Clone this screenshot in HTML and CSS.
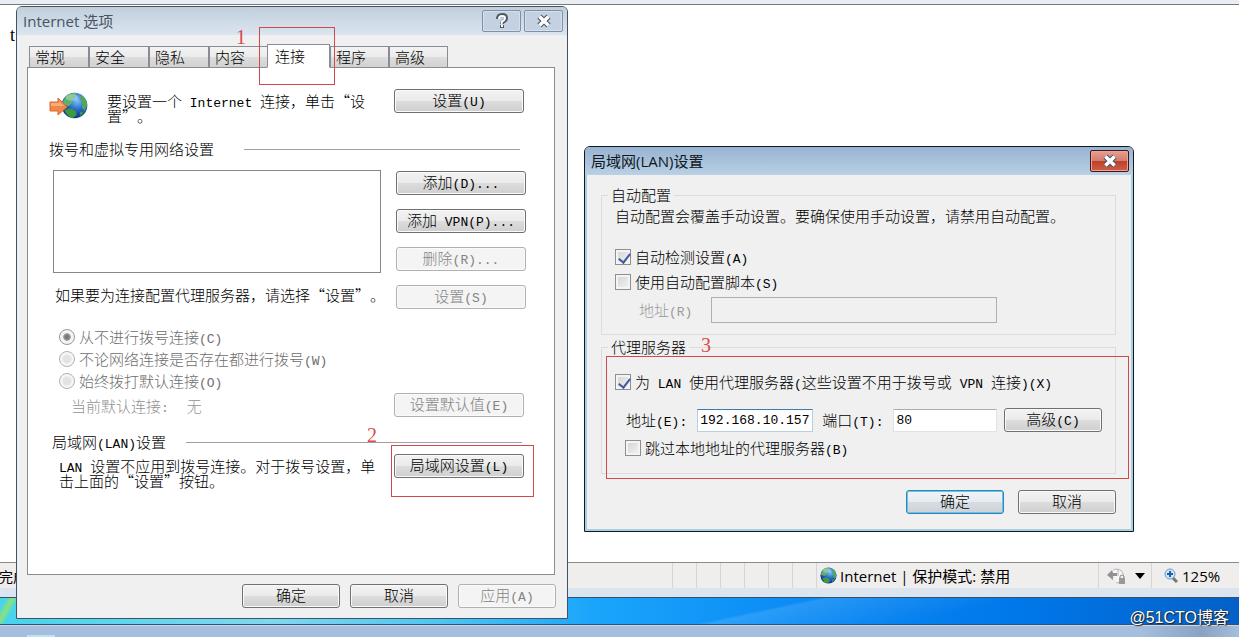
FILE: index.html
```html
<!DOCTYPE html>
<html lang="zh-CN">
<head>
    <meta charset="UTF-8">
    <meta name="viewport" content="width=device-width, initial-scale=1.0">
    <title>Internet 选项</title>
    <link rel="stylesheet" href="styles.css">
</head>
<body>
    <!-- Browser behind the dialogs -->
    <main class="browser">
        <p class="page-text">t</p>
    </main>
    <footer class="statusbar">
        <span class="status-done">完成</span>
        <span class="cells"><i></i><i></i><i></i><i></i><i></i><i></i></span>
        <span class="zone">
            <svg width="17" height="17" viewBox="0 0 40 40"><use href="#globe"/></svg>
            Internet | 保护模式: 禁用
        </span>
        <span class="privacy">
            <svg width="20" height="18" viewBox="0 0 20 18">
                <path d="M6 3a7 7 0 1 1 3 13" fill="#f6f6f6" stroke="#b5b5b5" stroke-width="1"/>
                <path d="M0 8l5-5 1 3h4v3H6v4z" fill="#929292"/>
                <path d="M11 2v7" stroke="#b5b5b5"/>
                <path d="M13 12v-2a2 2 0 0 1 4 0v2" fill="none" stroke="#888"/>
                <rect x="12" y="11" width="6" height="6" fill="#999"/>
            </svg>
            <svg width="10" height="6" viewBox="0 0 10 6"><path d="M0 0h10L5 6z" fill="#000"/></svg>
        </span>
        <span class="zoom">
            <svg width="14" height="15" viewBox="0 0 14 15">
                <path d="M8 9l5 5" stroke="#777" stroke-width="3"/>
                <circle cx="6" cy="6" r="5" fill="#cfe6f8" stroke="#6b9cc8"/>
                <path d="M6 3v6M3 6h6" stroke="#1f5fa8" stroke-width="2"/>
            </svg>
            125%
        </span>
    </footer>
    <div class="wallpaper"></div>
    <div class="taskbar"><span class="task-icon"></span></div>

    <!-- Internet options -->
    <section class="window options">
        <header class="titlebar">
            <h1>Internet 选项</h1>
            <button class="caption" aria-label="帮助">
                <svg width="12" height="16" viewBox="0 0 12 16">
                    <path d="M2 6q0-4 4-4t4 3q0 2-2 3t-2 3M6 12v3" fill="none" stroke="#4c5866" stroke-width="4"/>
                    <path d="M3 6q0-3 3-3t3 2q0 2-2 3t-1 3M6 12v2" fill="none" stroke="#fff" stroke-width="2"/>
                </svg>
            </button>
            <button class="caption" aria-label="关闭">
                <svg width="16" height="14" viewBox="0 0 14 12"><use href="#cross"/></svg>
            </button>
        </header>
        <nav class="tabs">
            <button>常规</button>
            <button>安全</button>
            <button>隐私</button>
            <button>内容</button>
            <button class="active">连接</button>
            <button>程序</button>
            <button>高级</button>
        </nav>
        <div class="panel">
            <div class="row setup">
                <svg class="net-icon" width="40" height="30" viewBox="0 0 40 30">
                    <svg x="12" y="1" width="27" height="27" viewBox="0 0 40 40"><use href="#globe"/></svg>
                    <path d="M1 11h8V7l9 9-9 8v-4H1z" fill="#f0874a" stroke="#e2662b"/>
                    <path d="M2 12h8v-2l5 5H2z" fill="#f8ae78"/>
                </svg>
                <p>要设置一个<span class="en"> Internet </span>连接，单击“设置”。</p>
                <button class="btn">设置<span class="en">(U)</span></button>
            </div>

            <h2 class="dial-title">拨号和虚拟专用网络设置</h2>
            <div class="row dial">
                <div class="dial-left">
                    <div class="listbox" role="listbox" aria-label="拨号和虚拟专用网络设置"></div>
                    <p>如果要为连接配置代理服务器，请选择“设置”。</p>
                </div>
                <div class="dial-buttons">
                    <button class="btn">添加<span class="en">(D)...</span></button>
                    <button class="btn">添加<span class="en"> VPN(P)...</span></button>
                    <button class="btn" disabled>删除<span class="en">(R)...</span></button>
                    <button class="btn" disabled>设置<span class="en">(S)</span></button>
                </div>
            </div>
            <div class="row defaults">
                <div class="radios">
                    <label><input type="radio" name="dial" checked disabled><span>从不进行拨号连接<span class="en">(C)</span></span></label>
                    <label><input type="radio" name="dial" disabled><span>不论网络连接是否存在都进行拨号<span class="en">(W)</span></span></label>
                    <label><input type="radio" name="dial" disabled><span>始终拨打默认连接<span class="en">(O)</span></span></label>
                    <p class="current"><span>当前默认连接<span class="en">:</span></span><span>无</span></p>
                </div>
                <button class="btn" disabled>设置默认值<span class="en">(E)</span></button>
            </div>

            <h2 class="lan-title"><span>局域网<span class="en">(LAN)</span>设置</span></h2>
            <div class="row lan">
                <p><span class="en">LAN </span>设置不应用到拨号连接。对于拨号设置，单击上面的“设置”按钮。</p>
                <button class="btn">局域网设置<span class="en">(L)</span></button>
            </div>
        </div>
        <div class="actions">
            <button class="btn">确定</button>
            <button class="btn">取消</button>
            <button class="btn" disabled>应用<span class="en">(A)</span></button>
        </div>
    </section>

    <!-- LAN settings -->
    <section class="window lan-window">
        <header class="titlebar">
            <h1>局域网(LAN)设置</h1>
            <button class="caption close" aria-label="关闭">
                <svg width="16" height="14" viewBox="0 0 14 12"><use href="#cross"/></svg>
            </button>
        </header>
        <form class="lan-form">
            <fieldset>
                <legend>自动配置</legend>
                <p>自动配置会覆盖手动设置。要确保使用手动设置，请禁用自动配置。</p>
                <label class="check first"><input type="checkbox" checked><span>自动检测设置<span class="en">(A)</span></span></label>
                <label class="check"><input type="checkbox"><span>使用自动配置脚本<span class="en">(S)</span></span></label>
                <div class="script-row">
                    <label for="script">地址<span class="en">(R)</span></label>
                    <input type="text" id="script" disabled>
                </div>
            </fieldset>
            <fieldset class="proxy">
                <legend>代理服务器</legend>
                <label class="check"><input type="checkbox" checked><span>为<span class="en"> LAN </span>使用代理服务器<span class="en">(</span>这些设置不用于拨号或<span class="en"> VPN </span>连接<span class="en">)(X)</span></span></label>
                <div class="proxy-row">
                    <label for="address">地址<span class="en">(E):</span></label>
                    <input type="text" id="address" value="192.168.10.157">
                    <label for="port">端口<span class="en">(T):</span></label>
                    <input type="text" id="port" value="80">
                    <button type="button" class="btn">高级<span class="en">(C)</span></button>
                </div>
                <label class="check bypass"><input type="checkbox"><span>跳过本地地址的代理服务器<span class="en">(B)</span></span></label>
            </fieldset>
            <div class="actions">
                <button type="button" class="btn primary">确定</button>
                <button type="button" class="btn">取消</button>
            </div>
        </form>
    </section>

    <!-- Step marks -->
    <div class="mark mark-1"></div><span class="step step-1">1</span>
    <div class="mark mark-2"></div><span class="step step-2">2</span>
    <div class="mark mark-3"></div><span class="step step-3">3</span>
    <div class="watermark">@51CTO博客</div>

    <!-- Shared icons -->
    <svg class="defs" width="0" height="0">
        <defs>
            <radialGradient id="sea" cx="60%" cy="30%" r="75%">
                <stop offset="0" stop-color="#7fc4f7"/>
                <stop offset="0.5" stop-color="#2468c4"/>
                <stop offset="1" stop-color="#0b2f7c"/>
            </radialGradient>
            <symbol id="globe" viewBox="0 0 40 40">
                <circle cx="20" cy="20" r="19" fill="url(#sea)"/>
                <path d="M7 7Q14 0 23 2l-2 6-5 3 1 5-6 5-9-3Q3 12 7 7z" fill="#5fb06a"/>
                <path d="M5 27l9-3 8 4 1 6-6 5Q9 36 5 27z" fill="#3d9a3f"/>
                <path d="M30 5q8 5 9 14l-4 9-4-5 1-8-4-5z" fill="#52a94e"/>
                <path d="M28 30l6-1-5 7z" fill="#3d9a3f"/>
                <ellipse cx="16" cy="8" rx="9" ry="5" fill="#fff" opacity="0.3"/>
            </symbol>
            <symbol id="cross" viewBox="0 0 14 12">
                <path d="M3 2l8 8M11 2l-8 8" stroke="#4c5866" stroke-width="5"/>
                <path d="M3 2l8 8M11 2l-8 8" stroke="#fff" stroke-width="3"/>
            </symbol>
        </defs>
    </svg>
</body>
</html>
```
FILE: styles.css
```css
* {
    box-sizing: border-box;
}
body {
    margin: 0;
    min-height: 100vh;
    display: flex;
    flex-direction: column;
    position: relative;
    overflow: hidden;
    background: #fff;
    color: #000;
    font-family: "Noto Sans CJK SC", sans-serif;
    font-size: 15px;
    font-weight: 300;
    line-height: 20px;
    text-spacing-trim: space-all;
}
h1, h2, p {
    margin: 0;
    font-size: 15px;
    font-weight: inherit;
}
button, input {
    font: inherit;
    color: inherit;
    margin: 0;
}
.en {
    font-family: "Liberation Mono", monospace;
    font-size: 13px;
    line-height: 0;
    white-space: pre;
}
.defs {
    position: absolute;
}

/* Browser and desktop */
.browser {
    flex: 1;
    border-top: 4px solid #e9eef4;
    box-shadow: inset 0 1px #777;
    padding: 21px 10px;
}
.page-text {
    font-family: "Liberation Serif", serif;
    font-size: 18px;
}
.statusbar {
    display: flex;
    height: 35px;
    border-top: 1px solid #8c8c8c;
    border-bottom: 9px solid #dbe5ef;
    background: #f0eeed;
    font-family: "Open Sans", "Noto Sans CJK SC", sans-serif;
    font-weight: 400;
    line-height: 28px;
    white-space: nowrap;
}
.status-done {
    flex: 1;
    margin-left: -1px;
    font-size: 14px;
}
.cells {
    display: flex;
}
.cells i {
    width: 24px;
    border-left: 1px solid #d5d5d5;
}
.zone, .privacy, .zoom {
    display: flex;
    align-items: center;
    border-left: 1px solid #d5d5d5;
}
.zone {
    width: 282px;
    gap: 3px;
    padding-left: 3px;
    font-size: 15px;
}
.privacy {
    width: 53px;
    gap: 8px;
    padding-left: 8px;
}
.zoom {
    width: 88px;
    gap: 4px;
    padding-left: 12px;
}
.wallpaper {
    height: 27px;
    border-top: 1px solid #35506b;
    background: linear-gradient(168deg, transparent 60%, rgba(255, 255, 255, 0.12) 61%, transparent 75%), linear-gradient(120deg, #45d4ec 5px, #8be27a 11px, #45d4ec 17px, transparent 18px), linear-gradient(90deg, #45d4ec, #7fd8ee 22%, #4cc4f2 36%, #1aa5fb 48%, #0a8af5 65%, #0078ea 82%, #0360c8);
}
.taskbar {
    height: 13px;
    border-top: 1px solid #35506b;
    box-shadow: inset 0 1px #c8d8ea;
    background: linear-gradient(90deg, #a5bedd 92%, #8ba3c2 97%, #a5bedd);
    padding: 10px 27px 0;
}
.task-icon {
    display: block;
    width: 28px;
    height: 2px;
    background: #b8e4f4;
}

/* Windows */
.window {
    position: absolute;
    width: 100%;
    border: 1px solid #45515e;
    border-radius: 6px 6px 0 0;
    background: #f0f0f0;
}
.options {
    left: 16px;
    top: 6px;
    max-width: 552px;
    box-shadow: inset 0 0 0 1px #eaf0f5;
}
.lan-window {
    left: 584px;
    top: 146px;
    max-width: 550px;
    border-color: #101820;
    box-shadow: inset 0 0 0 2px #a9cfe2;
}
.titlebar {
    display: flex;
    align-items: center;
    gap: 3px;
    height: 28px;
    padding: 0 4px 0 6px;
    border-radius: 5px 5px 0 0;
    background: linear-gradient(#c1cfdc, #dae5f0);
}
.titlebar h1 {
    flex: 1;
    color: #49535f;
    font-family: "Open Sans", "Noto Sans CJK SC", sans-serif;
    font-size: 15px;
    font-weight: 400;
}
.lan-window .titlebar {
    background: linear-gradient(#98b3d2, #b9d0e5);
}
.lan-window h1 {
    color: #101820;
}
.caption {
    display: flex;
    align-items: center;
    justify-content: center;
    width: 39px;
    height: 22px;
    padding: 0;
    border: 1px solid #7c91ab;
    border-radius: 2px;
    background: #c3d1e0;
    box-shadow: inset 0 0 0 1px #d5e0ea;
}
.close {
    border-color: #4b1216;
    background: linear-gradient(#e5a095, #d67c6c 48%, #bd3f28 50%, #cc6149);
    box-shadow: inset 0 0 0 1px #e6a79b;
}

/* Tabs */
.tabs {
    display: flex;
    align-items: flex-end;
    margin-bottom: -1px;
    padding: 9px 12px 0;
    position: relative;
}
.tabs button {
    width: 60px;
    height: 22px;
    padding: 0 5px;
    border: 1px solid #898c95;
    background: linear-gradient(#f3f3f3, #ebebeb 50%, #dddddd 50%, #d2d2d2);
    line-height: 20px;
    text-align: left;
}
.tabs .active {
    width: 63px;
    height: 24px;
    margin-left: -2px;
    padding: 0 7px;
    border-bottom-color: #fff;
    background: #fff;
}
.tabs .active ~ button {
    width: 59px;
}
.panel {
    margin: 0 12px 0 10px;
    padding: 21px 28px 86px 21px;
    border: 1px solid #898c95;
    background: #fff;
}

/* Buttons */
.btn {
    flex: none;
    width: 130px;
    height: 24px;
    padding: 0 0 2px;
    border: 1px solid #707070;
    border-radius: 3px;
    background: linear-gradient(#f2f2f2, #ebebeb 48%, #dddddd 50%, #cfcfcf);
    box-shadow: inset 0 0 0 1px #fafafa;
    line-height: 20px;
    white-space: nowrap;
}
.btn:disabled {
    border-color: #adb2b5;
    background: #f4f4f4;
    color: #838383;
}
.primary {
    border-color: #3c7fb1;
    background: linear-gradient(#eef3f6, #e6edf1 48%, #d6dde2 50%, #cbd3da);
    box-shadow: inset 0 0 0 1px #5cc8ee;
}
.actions {
    display: flex;
    justify-content: flex-end;
    gap: 10px;
    padding: 9px 11px 10px;
}
.actions .btn {
    width: 98px;
}

/* Connections panel */
.row {
    display: flex;
}
.row p {
    flex: 1;
}
.setup {
    padding-right: 2px;
}
.setup p, .lan p {
    margin-top: 4px;
    line-height: 15px;
}
.setup p {
    margin-left: 18px;
    padding-right: 24px;
}
.net-icon {
    margin-top: 2px;
}
.panel h2 {
    display: flex;
    align-items: center;
    margin-top: 15px;
    padding-right: 4px;
}
.panel h2::after {
    content: "";
    flex: 1;
    border-top: 1px solid #a0a0a0;
    margin-left: 20px;
}
.panel .dial-title {
    margin-top: 16px;
    padding-right: 6px;
}
.panel .dial-title::after {
    margin-left: 30px;
}
.panel .lan-title {
    padding-left: 3px;
}
.dial {
    gap: 15px;
    margin-top: 11px;
    padding-left: 4px;
}
.dial-left {
    flex: 1;
    min-width: 0;
}
.dial-left p {
    margin-top: 12px;
    padding-left: 2px;
    white-space: nowrap;
}
.listbox {
    height: 103px;
    border: 1px solid #828790;
}
.dial-buttons {
    display: flex;
    flex-direction: column;
    gap: 14px;
    padding-top: 1px;
}
.defaults {
    align-items: flex-end;
    justify-content: space-between;
    margin-top: 17px;
    padding: 0 2px 0 10px;
    color: #6d6d6d;
}
.radios label {
    display: flex;
    align-items: center;
    height: 22px;
}
input[type="radio"] {
    appearance: none;
    width: 16px;
    height: 16px;
    margin-right: 4px;
    border: 1px solid #b0b0b0;
    border-radius: 50%;
    background: radial-gradient(circle, #e3e3e3 35%, #fafafa 60%);
    box-shadow: inset 0 0 0 1px #f6f6f6;
}
input[type="radio"]:checked {
    border-color: #969696;
    background: radial-gradient(circle, #777 15%, #a2a2a2 35%, #f4f4f4 42%);
}
.radios .current {
    display: flex;
    gap: 18px;
    padding: 4px 0 1px 12px;
    color: #929292;
}
.lan {
    margin-top: 2px;
    padding: 0 2px 0 10px;
}
.lan p {
    padding-right: 17px;
}

/* LAN form */
.lan-form {
    padding: 10px 17px 0 16px;
}
fieldset {
    min-width: 0;
    margin: 0;
    padding: 0 0 11px;
    border: 1px solid #dcdcdc;
}
legend {
    margin-left: 6px;
    padding: 0 3px;
}
fieldset p {
    padding: 1px 13px 0;
}
.check {
    display: flex;
    align-items: center;
    height: 24px;
    margin: 1px 0 0 13px;
}
.first {
    margin-top: 19px;
}
input[type="checkbox"] {
    appearance: none;
    flex: none;
    width: 16px;
    height: 16px;
    margin-right: 4px;
    border: 1px solid #8e8f8f;
    background: linear-gradient(135deg, #cfd1d5, #f6f6f6);
    box-shadow: inset 0 0 0 2px #f4f4f4;
}
input[type="checkbox"]:checked::after {
    content: "";
    display: block;
    width: 5px;
    height: 10px;
    margin: 1px 0 0 5px;
    border: solid #42599a;
    border-width: 0 2px 2px 0;
    transform: rotate(38deg);
}
input[type="text"] {
    min-width: 0;
    border: 1px solid #dfe3e8;
    border-top-color: #abadb3;
    border-radius: 0;
    background: #fff;
    padding: 0 2px;
    height: 23px;
    font-family: "Liberation Mono", monospace;
    font-size: 13px;
}
.script-row {
    display: flex;
    align-items: center;
    gap: 19px;
    margin: 3px 118px 0 37px;
    color: #9a9a9a;
}
input#script {
    flex: 1;
    height: 26px;
    border-color: #afafaf;
    background: #f0f0f0;
}
.proxy {
    margin-top: 2px;
    padding-bottom: 13px;
}
.proxy .check {
    margin-top: 13px;
}
.proxy-row {
    display: flex;
    align-items: center;
    margin: 14px 13px 0 24px;
}
.proxy-row label {
    flex: none;
}
input#address {
    width: 116px;
    margin: 0 9px 0 10px;
    border-color: #b5cfe7;
    border-top-color: #3d7bad;
}
input#port {
    flex: 1;
    margin: 0 7px 0 10px;
}
.proxy-row .btn {
    width: 98px;
}
.proxy .bypass {
    margin: 4px 0 0 23px;
}
.lan-form .actions {
    gap: 14px;
    padding: 16px 0 17px;
}

/* Red marks */
.mark {
    position: absolute;
    border: 1px solid #cf4b4b;
}
.mark-1 {
    left: 259px;
    top: 27px;
    width: 76px;
    height: 58px;
}
.mark-2 {
    left: 391px;
    top: 445px;
    width: 143px;
    height: 52px;
}
.mark-3 {
    left: 606px;
    top: 356px;
    width: 523px;
    height: 123px;
}
.step {
    position: absolute;
    color: #dc4a4a;
    font-family: "Liberation Serif", serif;
    font-size: 20px;
    font-weight: 400;
}
.step-1 {
    left: 236px;
    top: 27px;
}
.step-2 {
    left: 367px;
    top: 425px;
}
.step-3 {
    left: 701px;
    top: 335px;
}
.watermark {
    position: absolute;
    right: 10px;
    bottom: 9px;
    color: #fff;
    font-family: "Liberation Sans", "Noto Sans CJK SC", sans-serif;
    font-size: 16px;
    font-weight: 400;
    text-shadow: 1px 1px 1px #222, 0 0 1px #222;
}
```
